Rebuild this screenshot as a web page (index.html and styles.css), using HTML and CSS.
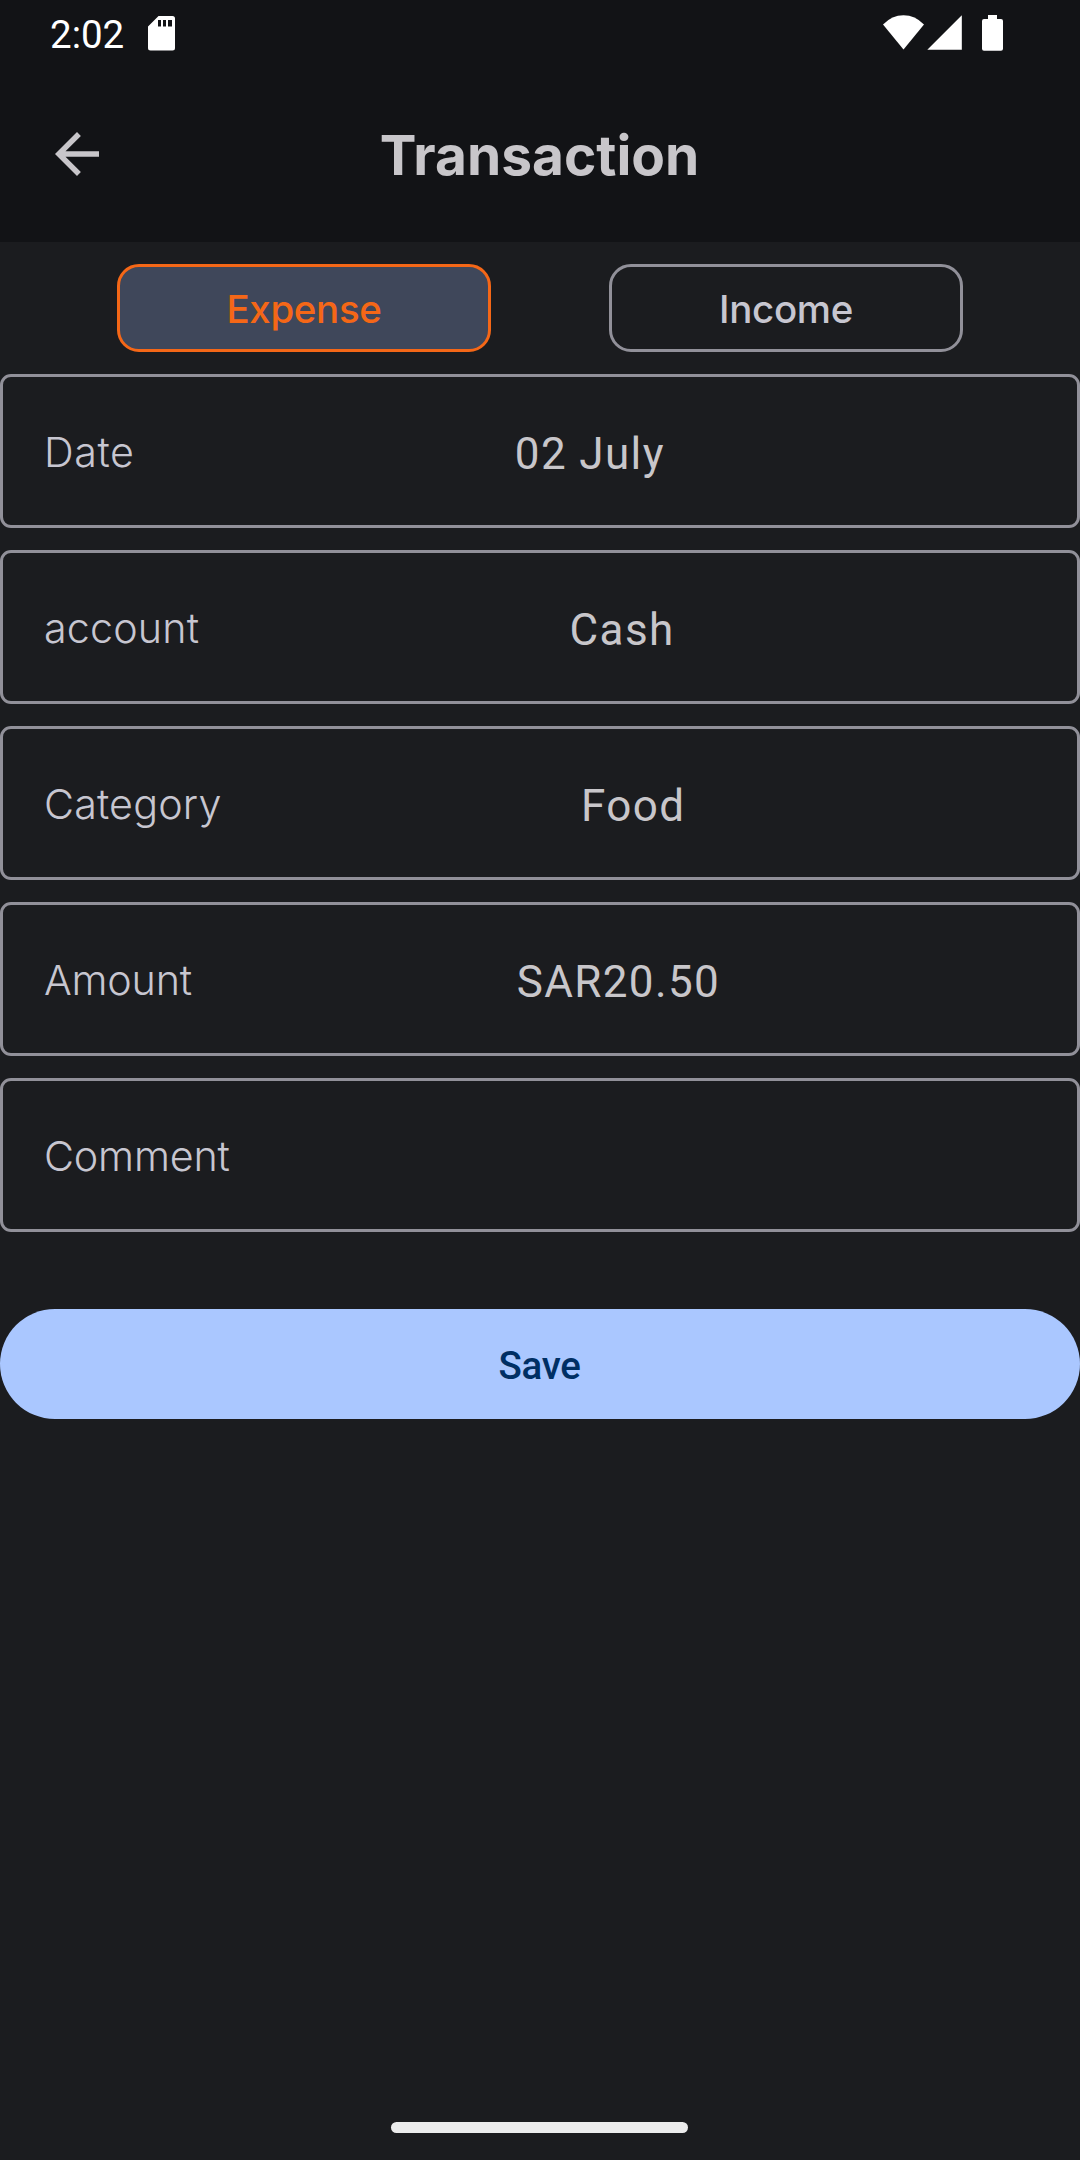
FILE: index.html
```html
<!DOCTYPE html>
<html lang="en">
<head>
<meta charset="utf-8">
<title>Transaction</title>
<link rel="stylesheet" href="styles.css">
</head>
<body>
<div class="screen">
  <div class="top">
    <div class="status-bar">
      <span class="time">2:02</span>
      <svg class="sd" width="27" height="35" viewBox="0 0 27 35"><path fill="#fff" fill-rule="evenodd" d="M10.5 0H24.5A2.5 2.5 0 0 1 27 2.500V32A2.500 2.500 0 0 1 24.500 34.500H2.500A2.500 2.500 0 0 1 0 32V10.500ZM10 4V10.500H13V4ZM15 4V10.500H18V4ZM20 4V10.500H24V4Z"/></svg>
      <svg class="signals" width="120" height="36" viewBox="0 0 120 36"><g fill="#fff"><path d="M0 9.500Q9 .3 20.500 .3T41 9.500L20.500 34.500Z"/><path d="M44.300 34.700L78.800 .2V34.700Z"/><path d="M105 0H114V4H118Q120 4 120 6V33.700Q120 35.700 118 35.700H101Q99 35.700 99 33.700V6Q99 4 101 4H105Z"/></g></svg>
    </div>
    <header class="app-bar">
      <svg class="back" width="44" height="44" viewBox="0 0 44 44"><path fill="#c8c6ca" d="M44 19.250H10.530L25.900 3.880 22 0 0 22 22 44 25.880 40.120 10.530 24.750H44Z"/></svg>
      <h1 class="title">Transaction</h1>
    </header>
  </div>
  <main class="form">
    <div class="types">
      <button class="type type-expense">Expense</button>
      <button class="type type-income">Income</button>
    </div>
    <div class="fields">
      <div class="field"><span class="label label-loose">Date</span><span class="value">02 July</span></div>
      <div class="field"><span class="label">account</span><span class="value">Cash</span></div>
      <div class="field"><span class="label">Category</span><span class="value">Food</span></div>
      <div class="field"><span class="label label-tight">Amount</span><span class="value">SAR20.50</span></div>
      <div class="field"><span class="label label-tight">Comment</span><span class="value"></span></div>
    </div>
    <button class="save">Save</button>
  </main>
  <div class="nav-handle"></div>
</div>
</body>
</html>
```
FILE: styles.css
```css
* { box-sizing: border-box; }
body { margin: 0; background: #1b1c1f; }
button { appearance: none; margin: 0; padding: 0; }
.screen {
  width: 1080px;
  height: 2160px;
  display: flex;
  flex-direction: column;
  overflow: hidden;
  background: #1b1c1f;
  font-family: Inter, "Liberation Sans", sans-serif;
  color: #c8c6ca;
}
.top { height: 242px; background: #121316; }
.status-bar {
  display: flex;
  align-items: flex-start;
  height: 66px;
  padding: 11px 77px 0 50px;
}
.time {
  width: 98px;
  padding-top: 1px;
  font: 400 38.5px/46px Roboto, sans-serif;
  color: #fff;
}
.sd { margin-top: 5px; }
.signals { margin: 4px 0 0 auto; }
.app-bar {
  display: grid;
  grid-template-columns: 1fr auto 1fr;
  align-items: start;
  height: 176px;
  padding: 66px 56px 0 55px;
}
.title {
  margin: -10px 0 0;
  font-size: 55px;
  line-height: 66px;
  font-weight: 700;
}
.form { display: flex; flex-direction: column; padding-top: 22px; }
.types {
  display: flex;
  justify-content: space-between;
  padding: 0 117px;
}
.type {
  height: 88px;
  padding-top: 2px;
  border: 3px solid #919099;
  border-radius: 22px;
  background: #1b1c1f;
  color: #c7c6d0;
  font: 500 38.5px/46px Inter, sans-serif;
  letter-spacing: -.35px;
}
.type-expense {
  width: 374px;
  border-color: #f56717;
  background: #3f475a;
  color: #f56717;
}
.type-income { width: 354px; }
.fields { display: flex; flex-direction: column; gap: 22px; margin-top: 22px; }
.field {
  display: flex;
  align-items: center;
  height: 154px;
  padding: 0 32px 0 41px;
  border: 3px solid #919099;
  border-radius: 11px;
}
.label {
  padding-top: 2px;
  font-size: 41.25px;
  line-height: 50px;
  font-weight: 300;
  letter-spacing: .15px;
  color: #c7c6d0;
}
.label-loose { letter-spacing: .6px; }
.label-tight { letter-spacing: -.2px; }
.value {
  flex: 1;
  text-align: center;
  font: 400 44px/52px Roboto, sans-serif;
  letter-spacing: 1.375px;
  padding-top: 6px;
}
.save {
  height: 110px;
  margin-top: 77px;
  padding: 3px 1px 0 0;
  border: 0;
  border-radius: 55px;
  background: #aac7ff;
  color: #002f64;
  font: 500 38.5px/46px Roboto, sans-serif;
  letter-spacing: -.3px;
}
.nav-handle {
  width: 297px;
  height: 11px;
  margin: auto auto 27.500px 391px;
  border-radius: 6px;
  background: #ececec;
}
```
